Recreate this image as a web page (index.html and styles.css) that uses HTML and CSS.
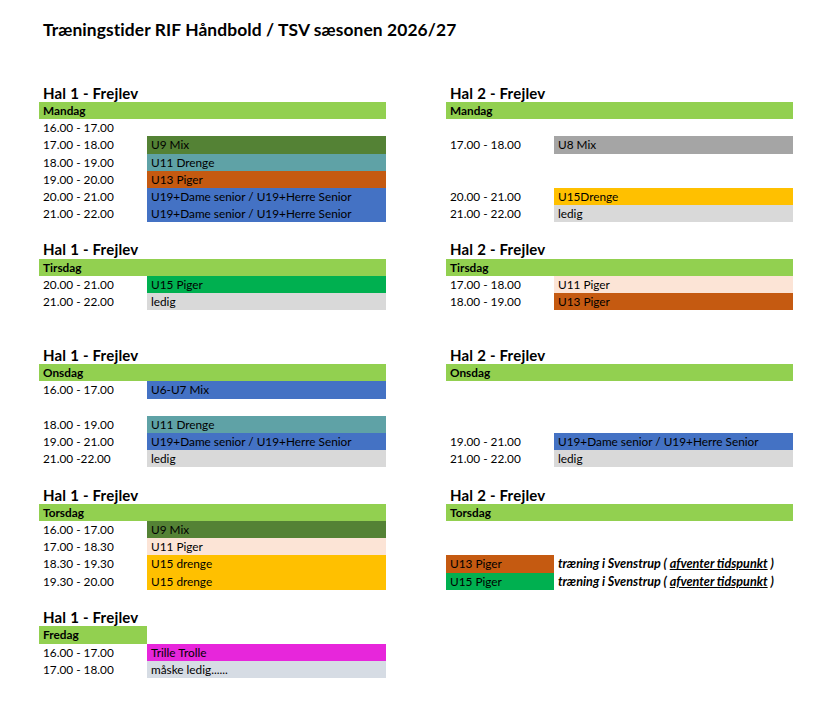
FILE: index.html
```html
<!DOCTYPE html>
<html lang="da">
<head>
<meta charset="utf-8">
<title>Træningstider RIF Håndbold / TSV sæsonen 2026/27</title>
<link rel="stylesheet" href="styles.css">
</head>
<body>
<div class="page">
  <h1 class="title">Træningstider RIF Håndbold / TSV sæsonen 2026/27</h1>
  <div class="board">
    <!-- Mandag -->
    <section class="sec">
      <div class="hal">Hal 1 - Frejlev</div>
      <div class="row head"><div class="t hdr">Mandag</div><div class="g hdr"></div></div>
      <div class="row"><div class="t">16.00 - 17.00</div><div class="g"></div></div>
      <div class="row"><div class="t">17.00 - 18.00</div><div class="g c-u9">U9 Mix</div></div>
      <div class="row"><div class="t">18.00 - 19.00</div><div class="g c-teal">U11 Drenge</div></div>
      <div class="row"><div class="t">19.00 - 20.00</div><div class="g c-brown">U13 Piger</div></div>
      <div class="row"><div class="t">20.00 - 21.00</div><div class="g c-blue">U19+Dame senior / U19+Herre Senior</div></div>
      <div class="row"><div class="t">21.00 - 22.00</div><div class="g c-blue">U19+Dame senior / U19+Herre Senior</div></div>
    </section>
    <section class="sec">
      <div class="hal">Hal 2 - Frejlev</div>
      <div class="row head"><div class="t hdr">Mandag</div><div class="g hdr"></div></div>
      <div class="row"><div class="t"></div><div class="g"></div></div>
      <div class="row"><div class="t">17.00 - 18.00</div><div class="g c-mid">U8 Mix</div></div>
      <div class="row"><div class="t"></div><div class="g"></div></div>
      <div class="row"><div class="t"></div><div class="g"></div></div>
      <div class="row"><div class="t">20.00 - 21.00</div><div class="g c-amber">U15Drenge</div></div>
      <div class="row"><div class="t">21.00 - 22.00</div><div class="g c-grey">ledig</div></div>
    </section>

    <!-- Tirsdag -->
    <section class="sec gap2">
      <div class="hal">Hal 1 - Frejlev</div>
      <div class="row head"><div class="t hdr">Tirsdag</div><div class="g hdr"></div></div>
      <div class="row"><div class="t">20.00 - 21.00</div><div class="g c-lime">U15 Piger</div></div>
      <div class="row"><div class="t">21.00 - 22.00</div><div class="g c-grey">ledig</div></div>
    </section>
    <section class="sec gap2">
      <div class="hal">Hal 2 - Frejlev</div>
      <div class="row head"><div class="t hdr">Tirsdag</div><div class="g hdr"></div></div>
      <div class="row"><div class="t">17.00 - 18.00</div><div class="g c-peach">U11 Piger</div></div>
      <div class="row"><div class="t">18.00 - 19.00</div><div class="g c-brown">U13 Piger</div></div>
    </section>

    <!-- Onsdag -->
    <section class="sec">
      <div class="hal">Hal 1 - Frejlev</div>
      <div class="row head"><div class="t hdr">Onsdag</div><div class="g hdr"></div></div>
      <div class="row"><div class="t">16.00 - 17.00</div><div class="g c-blue">U6-U7 Mix</div></div>
      <div class="row"><div class="t"></div><div class="g"></div></div>
      <div class="row"><div class="t">18.00 - 19.00</div><div class="g c-teal">U11 Drenge</div></div>
      <div class="row"><div class="t">19.00 - 21.00</div><div class="g c-blue">U19+Dame senior / U19+Herre Senior</div></div>
      <div class="row"><div class="t">21.00 -22.00</div><div class="g c-grey">ledig</div></div>
    </section>
    <section class="sec">
      <div class="hal">Hal 2 - Frejlev</div>
      <div class="row head"><div class="t hdr">Onsdag</div><div class="g hdr"></div></div>
      <div class="row"><div class="t"></div><div class="g"></div></div>
      <div class="row"><div class="t"></div><div class="g"></div></div>
      <div class="row"><div class="t"></div><div class="g"></div></div>
      <div class="row"><div class="t">19.00 - 21.00</div><div class="g c-blue">U19+Dame senior / U19+Herre Senior</div></div>
      <div class="row"><div class="t">21.00 - 22.00</div><div class="g c-grey">ledig</div></div>
    </section>

    <!-- Torsdag -->
    <section class="sec">
      <div class="hal">Hal 1 - Frejlev</div>
      <div class="row head"><div class="t hdr">Torsdag</div><div class="g hdr"></div></div>
      <div class="row"><div class="t">16.00 - 17.00</div><div class="g c-u9">U9 Mix</div></div>
      <div class="row"><div class="t">17.00 - 18.30</div><div class="g c-peach">U11 Piger</div></div>
      <div class="row"><div class="t">18.30 - 19.30</div><div class="g c-amber">U15 drenge</div></div>
      <div class="row"><div class="t">19.30 - 20.00</div><div class="g c-amber">U15 drenge</div></div>
    </section>
    <section class="sec">
      <div class="hal">Hal 2 - Frejlev</div>
      <div class="row head"><div class="t hdr">Torsdag</div><div class="g hdr"></div></div>
      <div class="row"><div class="t"></div><div class="g"></div></div>
      <div class="row"><div class="t"></div><div class="g"></div></div>
      <div class="row"><div class="t c-brown">U13 Piger</div><div class="g note">træning i Svenstrup ( <span class="ul">afventer tidspunkt</span> )</div></div>
      <div class="row"><div class="t c-lime">U15 Piger</div><div class="g note">træning i Svenstrup ( <span class="ul">afventer tidspunkt</span> )</div></div>
    </section>

    <!-- Fredag -->
    <section class="sec">
      <div class="hal">Hal 1 - Frejlev</div>
      <div class="row head"><div class="t hdr">Fredag</div><div class="g"></div></div>
      <div class="row"><div class="t">16.00 - 17.00</div><div class="g c-mag">Trille Trolle</div></div>
      <div class="row"><div class="t">17.00 - 18.00</div><div class="g c-slate">måske ledig......</div></div>
    </section>
  </div>
</div>
</body>
</html>
```

FILE: styles.css
```css
body {
  margin: 0;
  background: #ffffff;
  color: #000000;
  font-family: Lato, "Noto Sans", sans-serif;
}

.page {
  padding: 18px 0 0 39px;
}

.title {
  margin: 0 0 40.6px 0;
  padding-left: 4px;
  font-size: 17.4px;
  font-weight: 700;
  line-height: 24px;
  letter-spacing: 0.1px;
}

.board {
  display: grid;
  grid-template-columns: 347px 347px;
  column-gap: 60px;
  align-items: start;
}

.sec {
  margin-bottom: 17.2px;
}

.sec.gap2 {
  margin-bottom: 34.4px;
}

.hal {
  height: 19.4px;
  line-height: 20px;
  padding-left: 4px;
  font-size: 15px;
  font-weight: 700;
  letter-spacing: 0.2px;
}

.row {
  display: grid;
  grid-template-columns: 108px 239px;
  height: 17.2px;
  line-height: 17.2px;
  font-size: 11.8px;
}

.row > div {
  padding-left: 4px;
  white-space: nowrap;
  overflow: visible;
}

.head {
  font-weight: 700;
}

.hdr { background: #92d050; }
.c-u9 { background: #548235; }
.c-teal { background: #5fa2a6; }
.c-brown { background: #c55a11; }
.c-blue { background: #4472c4; }
.c-grey { background: #d9d9d9; }
.c-mid { background: #a5a5a5; }
.c-amber { background: #ffc000; }
.c-lime { background: #00b050; }
.c-peach { background: #fce4d6; }
.c-mag { background: #e726db; }
.c-slate { background: #d6dce4; }

.note {
  font-style: italic;
  font-weight: 700;
  font-size: 12.6px;
}

.ul {
  text-decoration: underline;
}
```
